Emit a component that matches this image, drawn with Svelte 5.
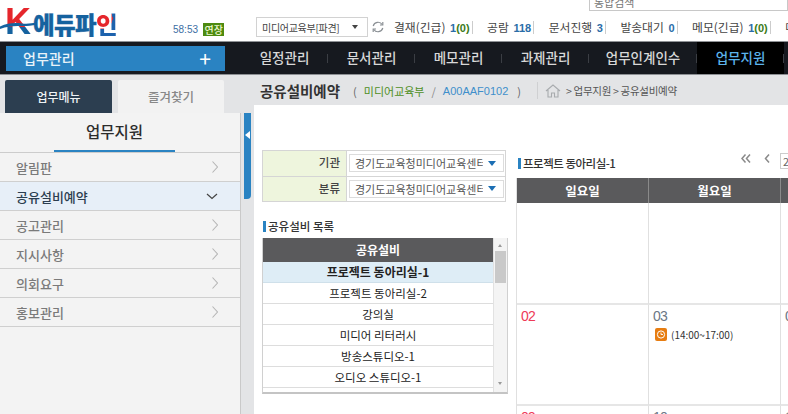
<script>
  const stats = [
    { label: '결재(긴급)', value: '1', extra: '(0)' },
    { label: '공람', value: '118' },
    { label: '문서진행', value: '3' },
    { label: '발송대기', value: '0' },
    { label: '메모(긴급)', value: '1', extra: '(0)' }
  ];
  const navs = ['일정관리', '문서관리', '메모관리', '과제관리', '업무인계인수', '업무지원'];
  const menu = ['알림판', '공유설비예약', '공고관리', '지시사항', '의회요구', '홍보관리'];
  const rooms = ['프로젝트 동아리실-1', '프로젝트 동아리실-2', '강의실', '미디어 리터러시', '방송스튜디오-1', '오디오 스튜디오-1'];
</script>

<div class="page">
  <header class="top">
    <div class="logo">
      <svg class="swoosh" width="40" height="12" viewBox="0 0 40 12"><path d="M0 7.5C8 4 14 3.5 22 4.5 27 5 32 4.5 37 3.5L37 5.5C30 7 26 7.2 20 7 13 6.8 7 7.5 0 10Z" fill="#15629f"/></svg>
      <span class="k">K</span><span class="word">에듀파<span class="in">인</span></span>
    </div>
    <div class="timer"><span>58:53</span><b>연장</b></div>
    <div class="top-right">
      <div class="search">통합검색</div>
      <div class="infos">
        <div class="org"><span>미디어교육부[파견]</span><i class="caret-dark"></i></div>
        <svg class="refresh" width="14" height="14" viewBox="0 0 14 14" fill="none" stroke="#8a8f94" stroke-width="1.2"><path d="M2.2 6a5 5 0 0 1 9-1.5M11.8 8a5 5 0 0 1-9 1.5"/><path d="M11.8 2v3H9M2.2 12V9H5"/></svg>
        {#each stats as s}
          <div class="stat">{s.label} <b class="num">{s.value}</b>{#if s.extra}<b class="green">{s.extra}</b>{/if}</div>
        {/each}
        <div class="stat last">메</div>
      </div>
    </div>
  </header>

  <nav class="nav">
    <div class="work"><span>업무관리</span><span class="plus">+</span></div>
    <ul>
      {#each navs as n, i}
        <li class:active={i === navs.length - 1}>{n}</li>
      {/each}
    </ul>
  </nav>

  <div class="main">
    <aside class="side">
      <div class="tabs">
        <div class="tab on">업무메뉴</div>
        <div class="tab">즐겨찾기</div>
      </div>
      <div class="panel">
        <h2><span>업무지원</span></h2>
        {#each menu as m, i}
          <div class="item" class:cur={i === 1}>
            <span>{m}</span>
            {#if i === 1}
              <svg width="12" height="7" viewBox="0 0 12 7" fill="none" stroke="#444" stroke-width="1.2"><path d="M1 1l5 4.5L11 1"/></svg>
            {:else}
              <svg width="6" height="12" viewBox="0 0 6 12" fill="none" stroke="#b5b5b5" stroke-width="1.1"><path d="M.5 .5L5.5 6 .5 11.5"/></svg>
            {/if}
          </div>
        {/each}
      </div>
    </aside>
    <div class="split"><div class="handle"><i></i></div></div>

    <section class="content">
      <div class="crumb">
        <strong>공유설비예약</strong>
        <span class="paren">(</span>
        <span class="dept">미디어교육부</span>
        <span class="slash">/</span>
        <span class="code">A00AAF0102</span>
        <span class="paren close">)</span>
        <span class="sep"></span>
        <svg class="home" width="16" height="14" viewBox="0 0 16 14" fill="none" stroke="#a8abae" stroke-width="1.1"><path d="M1 7l7-6 7 6M3 6v7h3.5V9h3v4H13V6"/></svg>
        <span class="path">&gt; 업무지원 &gt; 공유설비예약</span>
      </div>

      <div class="body">
        <div class="leftcol">
          <div class="filters">
            <div class="frow">
              <div class="flabel">기관</div>
              <div class="fval"><div class="sel"><span>경기도교육청미디어교육센터</span><i class="caret"></i></div></div>
            </div>
            <div class="frow">
              <div class="flabel">분류</div>
              <div class="fval"><div class="sel"><span>경기도교육청미디어교육센터</span><i class="caret"></i></div></div>
            </div>
          </div>
          <h3 class="sub">공유설비 목록</h3>
          <div class="list">
            <div class="rows">
              <div class="lhead">공유설비</div>
              {#each rooms as r, i}
                <div class="lrow" class:sel-row={i === 0}>{r}</div>
              {/each}
            </div>
            <div class="sb">
              <i class="up"></i>
              <div class="thumb"></div>
              <i class="down"></i>
            </div>
          </div>
        </div>

        <div class="rightcol">
          <div class="calbar">
            <h3 class="sub cal">프로젝트 동아리실-1</h3>
            <div class="pager">
              <svg width="10" height="9" viewBox="0 0 10 9" fill="none" stroke="#8a8a8a" stroke-width="1.5"><path d="M4.5 .5L1 4.5l3.5 4M9 .5L5.5 4.5 9 8.5"/></svg>
              <svg class="single" width="6" height="9" viewBox="0 0 6 9" fill="none" stroke="#8a8a8a" stroke-width="1.5"><path d="M5 .5L1.5 4.5 5 8.5"/></svg>
              <span class="yr">2</span>
            </div>
          </div>
          <div class="cal-grid">
            <div class="ch">일요일</div>
            <div class="ch">월요일</div>
            <div class="ch">화요일</div>

            <div class="cell first"></div>
            <div class="cell first"></div>
            <div class="cell first"></div>

            <div class="cell"><span class="d red">02</span></div>
            <div class="cell">
              <span class="d">03</span>
              <div class="ev">
                <svg width="12" height="13" viewBox="0 0 12 13"><rect width="12" height="13" rx="2" fill="#e77d11"/><circle cx="6" cy="6.5" r="3.6" fill="none" stroke="#fff" stroke-width="1"/><path d="M6 4.5v2h2" fill="none" stroke="#fff" stroke-width=".9"/></svg>
                <span>(14:00~17:00)</span>
              </div>
            </div>
            <div class="cell"><span class="d">04</span></div>

            <div class="cell"><span class="d red">09</span></div>
            <div class="cell"><span class="d">10</span></div>
            <div class="cell"><span class="d">11</span></div>
          </div>
        </div>
      </div>
    </section>
  </div>
</div>

<style>
  :global(body) { margin: 0; background: #fff; }
  .page {
    width: 788px; height: 414px; overflow: hidden; position: relative;
    font-family: "Noto Sans CJK KR", "Noto Sans", sans-serif; font-size: 12px; color: #333;
    display: flex; flex-direction: column;
  }
  .top { height: 41px; flex: none; display: flex; background: #fff; border-bottom: 1px solid #8f9296; box-sizing: content-box; }
  .logo {
    width: 170px; flex: none; box-sizing: border-box; height: 41px; position: relative;
    white-space: nowrap; overflow: hidden; padding: 0 0 0 6px;
  }
  .k {
    position: absolute; left: 5px; top: 2px; font: 700 36px/40px "Liberation Sans", sans-serif;
    background: linear-gradient(180deg, #e5262c 62%, #15629f 62%);
    -webkit-background-clip: text; background-clip: text; color: transparent;
  }
  .swoosh { position: absolute; left: 0; top: 19px; z-index: 1; }
  .word {
    position: absolute; left: 33px; top: 6px; font-size: 23.5px; font-weight: 900; line-height: 36px; color: #15629f;
    letter-spacing: -.6px; -webkit-text-stroke: .3px #15629f;
  }
  .in {
    background: radial-gradient(circle at 30% 34%, #e5262c 38%, #1d62ad 39%);
    -webkit-background-clip: text; background-clip: text; color: transparent; -webkit-text-stroke: 0;
  }
  .timer { flex: none; display: flex; align-items: center; gap: 5px; padding-top: 17px; width: 83px; box-sizing: border-box; height: 41px; color: #3c6ea3; font-size: 10px; font-family: "Liberation Sans", sans-serif; white-space: nowrap; margin-left: 3px; }
  .timer b { background: #4d8a10; color: #eef9d2; font-size: 10px; font-weight: 500; padding: 0 1.5px; height: 13px; line-height: 13px; font-family: "Noto Sans CJK KR", sans-serif; }
  .top-right { flex: 1; min-width: 0; }
  .search { height: 11px; margin-left: 333px; box-sizing: border-box; border: 1px solid #c8c8c8; border-top: 0; color: #777; font-size: 11px; line-height: 4px; padding-left: 4px; overflow: hidden; }
  .infos { display: flex; align-items: center; height: 22px; margin-top: 5px; white-space: nowrap; }
  .org { width: 112px; height: 20px; box-sizing: border-box; border: 1px solid #d2d2d2; display: flex; align-items: center; justify-content: space-between; padding: 0 9px 0 5px; font-size: 10px; flex: none; color: #444; letter-spacing: -.3px; }
  .caret-dark { width: 0; height: 0; border: 3px solid transparent; border-top: 4px solid #444; border-bottom: 0; }
  .refresh { margin: 0 9px 0 3px; flex: none; }
  .stat { font-size: 11.8px; color: #444; padding-right: 2px; margin-right: 14.5px; border-right: 1px solid #ccc; line-height: 12px; flex: none; }
  .stat b { color: #2a6da8; font-family: "Liberation Sans", sans-serif; font-weight: 700; font-size: 11px; }
  .stat b.num { margin-left: 2px; }
  .stat b.green { color: #3b7a1a; }
  .stat.last { border: 0; margin: 0; }

  .nav { height: 33px; flex: none; background: #16191f; display: flex; align-items: center; border-bottom: 1px solid #8c8f93; box-sizing: border-box; }
  .work { width: 219px; height: 25px; margin-left: 6px; background: #2a83c2; color: #eaf3f9; font-size: 14px; font-weight: 500; display: flex; justify-content: space-between; align-items: center; padding: 0 14px 0 17px; box-sizing: border-box; flex: none; }
  .plus { font-size: 21px; font-weight: 400; line-height: 20px; color: #fff; }
  ul { list-style: none; margin: 0 0 0 16px; padding: 0; display: flex; height: 32px; }
  li { width: 87px; box-sizing: border-box; text-align: center; color: #d8d8d8; font-size: 13.5px; font-weight: 500; line-height: 31px; white-space: nowrap; position: relative; }
  li:nth-child(5) { width: 108px; }
  li.active { background: #000; color: #5db4ec; }
  li::after { content: ""; position: absolute; right: 0; top: 12px; height: 9px; width: 1px; background: #3b3e44; }

  .main { flex: 1; display: flex; min-height: 0; background: #e3e4e6; }
  .side { width: 241px; flex: none; display: flex; flex-direction: column; }
  .tabs { height: 38px; flex: none; display: flex; gap: 6px; padding: 5px 0 0 5px; box-sizing: border-box; }
  .tab { width: 106px; height: 33px; background: #f2f2f2; color: #888; text-align: center; line-height: 33px; font-size: 12.5px; font-weight: 500; border-radius: 2px 2px 0 0; }
  .tab.on { background: #2c3e50; color: #eef2f5; font-size: 12px; width: 107px; }
  .panel { flex: 1; background: #f3f3f3; border-right: 1px solid #c9c9c9; }
  h2 { margin: 0; height: 40px; border-bottom: 1px solid #ccc; text-align: center; font-size: 15.5px; font-weight: 500; color: #2c2c2c; box-sizing: border-box; }
  h2 span { display: block; width: 121px; margin: 0 0 0 54px; height: 39px; line-height: 37px; border-bottom: 2px solid #2a83c2; box-sizing: border-box; }
  .item { height: 29px; box-sizing: border-box; border-bottom: 1px solid #cfcfcf; display: flex; justify-content: space-between; align-items: center; padding: 0 22px 0 16px; color: #7a7a7a; font-size: 13px; font-weight: 500; }
  .item.cur { background: #e7eff8; color: #2c3e50; padding-right: 22px; }
  .split { width: 13px; flex: none; padding: 38px 0 0 3px; box-sizing: border-box; }
  .handle { width: 7px; height: 86px; background: #2a83c2; border-radius: 0 0 4px 0; display: flex; align-items: center; padding-bottom: 42px; box-sizing: border-box; }
  .handle i { width: 0; height: 0; border: 4px solid transparent; border-right: 5px solid #fff; border-left: 0; margin-left: 1px; }

  .content { flex: 1; min-width: 0; display: flex; flex-direction: column; }
  .crumb { height: 30px; flex: none; display: flex; align-items: center; white-space: nowrap; padding-left: 6px; margin-left: 0; font-size: 11px; padding-top: 1px; box-sizing: border-box; }
  .crumb strong { font-size: 14.5px; font-weight: 700; color: #333; margin-right: 13px; }
  .paren { color: #666; margin-right: 7px; }
  .paren.close { margin: 0 0 0 9px; }
  .dept { color: #4f8f1e; }
  .slash { color: #888; margin: 0 7px; }
  .code { color: #3f8fcb; font-family: "Liberation Sans", sans-serif; font-size: 11px; }
  .sep { width: 1px; height: 17px; background: #cfd0d2; margin: 0 7px 0 16px; }
  .home { margin-right: 5px; }
  .path { color: #555; font-size: 10.5px; letter-spacing: -.3px; }

  .body { flex: 1; min-height: 0; background: #fff; display: flex; padding: 45px 0 0 8px; gap: 8px; overflow: hidden; }
  .leftcol { width: 246px; flex: none; }
  .filters { width: 244px; border: 1px solid #d5d5d5; box-sizing: border-box; }
  .frow { height: 24.5px; display: flex; }
  .frow + .frow { border-top: 1px solid #d5d5d5; }
  .flabel { width: 84px; flex: none; background: #eef5dd; text-align: right; padding-right: 6px; box-sizing: border-box; border-right: 1px solid #d5d5d5; line-height: 23px; color: #444; font-weight: 500; font-size: 11.5px; }
  .fval { flex: 1; display: flex; align-items: center; padding-left: 2px; min-width: 0; }
  .sel { width: 155px; height: 18px; border: 1px solid #dcdcdc; box-sizing: border-box; display: flex; align-items: center; padding: 0 7px 0 5px; justify-content: space-between; font-size: 11px; color: #555; }
  .sel span { width: 128px; overflow: hidden; white-space: nowrap; }
  .caret { width: 0; height: 0; border: 4px solid transparent; border-top: 5px solid #1c6fb4; border-bottom: 0; flex: none; }
  .sub { margin: 0; font-size: 11.5px; font-weight: 500; color: #333; border-left: 3px solid #2a83c2; padding-left: 2px; line-height: 11px; height: 11px; white-space: nowrap; }
  .leftcol .sub { margin: 19px 0 6px 1px; }
  .list { width: 246px; height: 156px; display: flex; border: 1px solid #d0d0d0; border-top: 0; border-bottom: 2px solid #c4c4c4; box-sizing: border-box; }
  .rows { flex: 1; min-width: 0; }
  .lhead { height: 24px; background: #5a5a5c; color: #fff; text-align: center; line-height: 24px; font-weight: 700; font-size: 12px; }
  .lrow { height: 21px; box-sizing: border-box; border-bottom: 1px solid #ddd; text-align: center; line-height: 20px; color: #222; font-size: 11.5px; }
  .lrow.sel-row { background: #deedf6; font-weight: 700; font-size: 12px; border-bottom-color: #cfe0ea; }
  .sb { width: 14px; flex: none; background: #f4f4f4; border-left: 1px solid #e2e2e2; box-sizing: border-box; position: relative; padding-top: 13px; }
  .thumb { height: 32px; background: #c9c9c9; margin: 0 1px; }
  .up, .down { position: absolute; left: 4px; width: 0; height: 0; border: 2.5px solid transparent; }
  .up { top: 6px; border-bottom: 3px solid #999; border-top: 0; }
  .down { bottom: 7px; border-top: 3px solid #999; border-bottom: 0; }

  .rightcol { width: 400px; flex: none; margin-left: -4px; padding-left: 4px; }
  .calbar { height: 28px; position: relative; }
  .sub.cal { position: relative; top: 4px; margin-left: 2px; display: inline-block; letter-spacing: -.5px; }
  .pager { position: absolute; left: 225px; top: 3px; display: flex; align-items: flex-start; gap: 13px; white-space: nowrap; }
  .pager svg { margin-top: 1px; }
  .yr { border: 1px solid #ccc; width: 30px; height: 14px; line-height: 14px; padding-left: 2px; color: #666; font-size: 11px; margin-left: -3px; }
  .cal-grid { display: grid; grid-template-columns: 132px 132px 132px; grid-template-rows: 25px 102px 101px 40px; border-left: 1px solid #e0e0e0; width: 397px; box-sizing: border-box; }
  .ch { background: #5a5a5c; color: #fff; text-align: center; line-height: 25px; font-weight: 700; font-size: 12.5px; border-right: 1px solid #8a8a8a; }
  .cell { border-right: 1px solid #e0e0e0; border-bottom: 2px solid #e6e6e6; box-sizing: border-box; padding: 4px 0 0 4px; }
  .d { font-family: "Liberation Sans", sans-serif; font-size: 14px; letter-spacing: -.8px; color: #6b7785; line-height: 15px; display: block; }
  .d.red { color: #ee3a57; }
  .ev { display: flex; align-items: center; gap: 4px; margin-top: 3px; padding-left: 2px; font-size: 10px; color: #333; white-space: nowrap; }
  .ev svg { flex: none; }
</style>
